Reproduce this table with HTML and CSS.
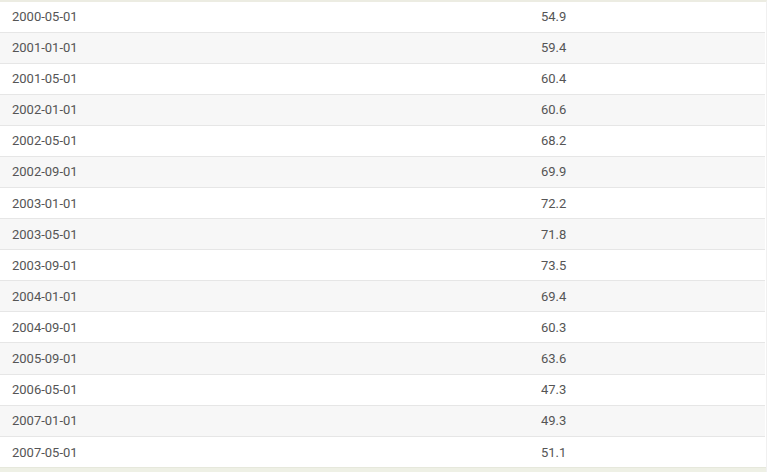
FILE: index.html
```html
<!DOCTYPE html>
<html>
<head>
<meta charset="utf-8">
<link rel="stylesheet" href="styles.css">
</head>
<body>
<div class="wrap">
<table class="data">
<tbody>
<tr><td class="c-date">2000-05-01</td><td class="c-val">54.9</td></tr>
<tr><td class="c-date">2001-01-01</td><td class="c-val">59.4</td></tr>
<tr><td class="c-date">2001-05-01</td><td class="c-val">60.4</td></tr>
<tr><td class="c-date">2002-01-01</td><td class="c-val">60.6</td></tr>
<tr><td class="c-date">2002-05-01</td><td class="c-val">68.2</td></tr>
<tr><td class="c-date">2002-09-01</td><td class="c-val">69.9</td></tr>
<tr><td class="c-date">2003-01-01</td><td class="c-val">72.2</td></tr>
<tr><td class="c-date">2003-05-01</td><td class="c-val">71.8</td></tr>
<tr><td class="c-date">2003-09-01</td><td class="c-val">73.5</td></tr>
<tr><td class="c-date">2004-01-01</td><td class="c-val">69.4</td></tr>
<tr><td class="c-date">2004-09-01</td><td class="c-val">60.3</td></tr>
<tr><td class="c-date">2005-09-01</td><td class="c-val">63.6</td></tr>
<tr><td class="c-date">2006-05-01</td><td class="c-val">47.3</td></tr>
<tr><td class="c-date">2007-01-01</td><td class="c-val">49.3</td></tr>
<tr><td class="c-date">2007-05-01</td><td class="c-val">51.1</td></tr>
</tbody>
</table>
<div class="foot"></div>
</div>
</body>
</html>
```
FILE: styles.css
```css
html, body {
  margin: 0;
  padding: 0;
  background: #ffffff;
}
.wrap {
  width: 766px;
  border-top: 2px solid #ecece2;
  border-right: 1px solid #f0f0f0;
}
.data {
  width: 765px;
  border-collapse: collapse;
  font-family: Roboto, "Liberation Sans", sans-serif;
  font-size: 13px;
  color: #555555;
}
.data tr {
  height: 31.1px;
}
.data tr:first-child {
  height: 30px;
}
.data tr + tr td {
  border-top: 1px solid #e6e6e6;
}
.data tr:nth-child(even) td {
  background: #f7f7f7;
}
.data td {
  padding: 0 0 0 12px;
  vertical-align: middle;
}
.c-date {
  width: 517px;
}
.foot {
  height: 5px;
  background: #eef0e5;
  border-top: 1px solid #e6e8dc;
}
```
